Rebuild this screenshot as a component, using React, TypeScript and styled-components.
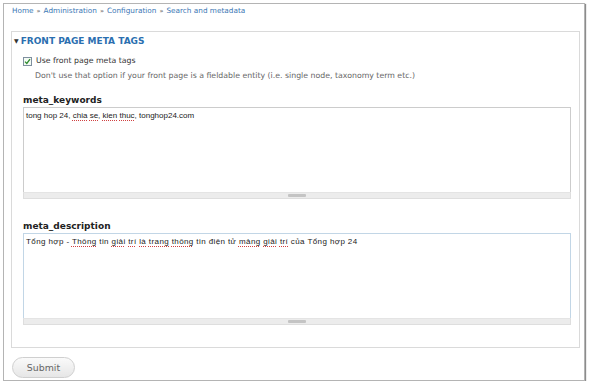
import React from "react";
import styled, { createGlobalStyle } from "styled-components";

const GlobalStyle = createGlobalStyle`
  html, body {
    margin: 0;
    padding: 0;
    background: #ffffff;
  }
  body {
    font-family: "DejaVu Sans", Verdana, sans-serif;
    color: #333;
  }
`;

const Frame = styled.div`
  box-sizing: border-box;
  width: 582px;
  height: 378px;
  margin: 3px 0 0 3px;
  border: 1px solid #b4b4b4;
  box-shadow: 1px 1px 1px #8c8c8c;
  padding: 0 4px 0 7px;
  background: #fff;
`;

const Breadcrumb = styled.div`
  height: 26px;
  padding: 1px 0 0 1px;
  font-size: 7.3px;
  line-height: 11px;
  color: #888;
`;

const Crumb = styled.a`
  color: #3c78b5;
  text-decoration: none;
`;

const Sep = styled.span`
  color: #555;
  margin: 0 3px;
  font-size: 6.5px;
`;

const Fieldset = styled.div`
  box-sizing: border-box;
  width: 569px;
  height: 317px;
  border: 1px solid #dadada;
  padding: 3px 8px 0 11px;
`;

const Legend = styled.div`
  margin-left: -9px;
  display: flex;
  align-items: center;
  gap: 2px;
  font-size: 9px;
  font-weight: bold;
  line-height: 12px;
  color: #2b6fb0;
  text-transform: uppercase;
`;

const Caret = styled.span`
  font-size: 6px;
  color: #333;
`;

const CheckRow = styled.label`
  display: flex;
  align-items: center;
  gap: 4px;
  margin-top: 8px;
  font-size: 7.8px;
  line-height: 12px;
  color: #333;
`;

const Box = styled.span`
  box-sizing: border-box;
  width: 9px;
  height: 9px;
  border: 1px solid #7f8f9f;
  background: #f4fbf4;
  display: flex;
  align-items: center;
  justify-content: center;
`;

const Help = styled.div`
  margin: 3px 0 0 12px;
  font-size: 7.8px;
  line-height: 12px;
  color: #666;
`;

const FieldLabel = styled.div<{ $top: number }>`
  margin-top: ${({ $top }) => $top}px;
  font-size: 9px;
  font-weight: bold;
  line-height: 12px;
  color: #222;
`;

const Area = styled.div<{ $focus?: boolean }>`
  box-sizing: border-box;
  width: 548px;
  height: 85px;
  margin-top: 1px;
  border: 1px solid ${({ $focus }) => ($focus ? "#c2d6e6" : "#cccccc")};
  border-bottom: none;
  padding: 2px 2px;
  font-family: "Liberation Sans", Arial, sans-serif;
  font-size: 8px;
  line-height: 11px;
  letter-spacing: ${({ $focus }) => ($focus ? "0.4px" : "0")};
  color: #222;
`;

const Grippie = styled.div`
  box-sizing: border-box;
  width: 548px;
  height: 7px;
  background: #ececec;
  border: 1px solid #dedede;
  border-top-color: #e4e4e4;
  display: flex;
  align-items: center;
  justify-content: center;
`;

const Handle = styled.span`
  width: 18px;
  height: 3px;
  background: #c4c4c4;
  border-radius: 1px;
`;

const Typo = styled.span`
  text-decoration: underline dotted #d04040;
  text-underline-offset: 1.5px;
`;

const Submit = styled.button`
  margin-top: 9px;
  margin-left: 1px;
  width: 63px;
  height: 21px;
  border: 1px solid #cfcfcf;
  border-radius: 11px;
  background: linear-gradient(#fafafa, #e6e6e6);
  font-family: "DejaVu Sans", Verdana, sans-serif;
  font-size: 9.4px;
  color: #666;
  padding: 0;
`;

const Check = () => (
  <svg width="7" height="7" viewBox="0 0 7 7">
    <path d="M1 3.6 L2.8 5.4 L6 1.2" fill="none" stroke="#2d8a2d" strokeWidth="1.3" />
  </svg>
);

const crumbs = ["Home", "Administration", "Configuration", "Search and metadata"];

export default function App() {
  return (
    <>
      <GlobalStyle />
      <Frame>
        <Breadcrumb>
          {crumbs.map((c, i) => (
            <React.Fragment key={c}>
              {i > 0 && <Sep>»</Sep>}
              <Crumb href="#">{c}</Crumb>
            </React.Fragment>
          ))}
        </Breadcrumb>
        <Fieldset>
          <Legend>
            <Caret>▼</Caret>
            Front page meta tags
          </Legend>
          <CheckRow>
            <Box>
              <Check />
            </Box>
            Use front page meta tags
          </CheckRow>
          <Help>
            Don't use that option if your front page is a fieldable entity (i.e. single node, taxonomy term etc.)
          </Help>
          <FieldLabel $top={12}>meta_keywords</FieldLabel>
          <Area>
            tong hop 24, <Typo>chia</Typo> <Typo>se</Typo>, <Typo>kien</Typo> <Typo>thuc</Typo>, tonghop24.com
          </Area>
          <Grippie>
            <Handle />
          </Grippie>
          <FieldLabel $top={21}>meta_description</FieldLabel>
          <Area $focus>
            Tổng hợp - <Typo>Thông</Typo> tin <Typo>giải</Typo> <Typo>trí</Typo> <Typo>là</Typo>{" "}
            <Typo>trang</Typo> <Typo>thông</Typo> tin điện tử <Typo>mảng</Typo> <Typo>giải</Typo>{" "}
            <Typo>trí</Typo> của Tổng hợp 24
          </Area>
          <Grippie>
            <Handle />
          </Grippie>
        </Fieldset>
        <Submit>Submit</Submit>
      </Frame>
    </>
  );
}
